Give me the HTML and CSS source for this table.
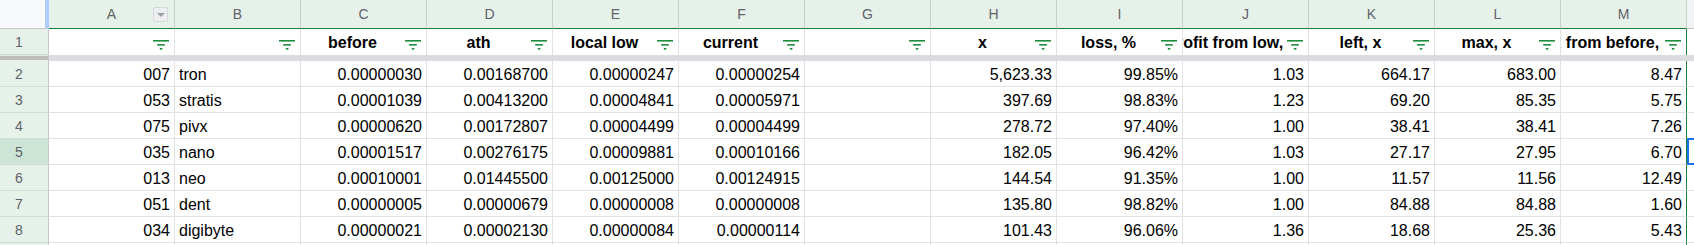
FILE: index.html
```html
<!DOCTYPE html>
<html>
<head>
<meta charset="utf-8">
<link rel="stylesheet" href="styles.css">
</head>
<body>
<div class="sheet">
  <div class="corner"></div>
  <div class="ch">A<span class="dd"></span></div>
  <div class="ch">B</div>
  <div class="ch">C</div>
  <div class="ch">D</div>
  <div class="ch">E</div>
  <div class="ch">F</div>
  <div class="ch">G</div>
  <div class="ch">H</div>
  <div class="ch">I</div>
  <div class="ch">J</div>
  <div class="ch">K</div>
  <div class="ch">L</div>
  <div class="ch">M</div>
  <div class="ch out"></div>

  <div class="rh">1</div>
  <div class="f"><span class="lbl"></span><span class="ico"><svg width="16" height="10" viewBox="0 0 16 10"><rect x="0" y="0" width="16" height="1.6"/><rect x="4.2" y="4" width="7.6" height="1.6"/><rect x="6.8" y="8" width="2.6" height="1.6"/></svg></span></div>
  <div class="f"><span class="lbl"></span><span class="ico"><svg width="16" height="10" viewBox="0 0 16 10"><rect x="0" y="0" width="16" height="1.6"/><rect x="4.2" y="4" width="7.6" height="1.6"/><rect x="6.8" y="8" width="2.6" height="1.6"/></svg></span></div>
  <div class="f"><span class="lbl"><span>before</span></span><span class="ico"><svg width="16" height="10" viewBox="0 0 16 10"><rect x="0" y="0" width="16" height="1.6"/><rect x="4.2" y="4" width="7.6" height="1.6"/><rect x="6.8" y="8" width="2.6" height="1.6"/></svg></span></div>
  <div class="f"><span class="lbl"><span>ath</span></span><span class="ico"><svg width="16" height="10" viewBox="0 0 16 10"><rect x="0" y="0" width="16" height="1.6"/><rect x="4.2" y="4" width="7.6" height="1.6"/><rect x="6.8" y="8" width="2.6" height="1.6"/></svg></span></div>
  <div class="f"><span class="lbl"><span>local low</span></span><span class="ico"><svg width="16" height="10" viewBox="0 0 16 10"><rect x="0" y="0" width="16" height="1.6"/><rect x="4.2" y="4" width="7.6" height="1.6"/><rect x="6.8" y="8" width="2.6" height="1.6"/></svg></span></div>
  <div class="f"><span class="lbl"><span>current</span></span><span class="ico"><svg width="16" height="10" viewBox="0 0 16 10"><rect x="0" y="0" width="16" height="1.6"/><rect x="4.2" y="4" width="7.6" height="1.6"/><rect x="6.8" y="8" width="2.6" height="1.6"/></svg></span></div>
  <div class="f"><span class="lbl"></span><span class="ico"><svg width="16" height="10" viewBox="0 0 16 10"><rect x="0" y="0" width="16" height="1.6"/><rect x="4.2" y="4" width="7.6" height="1.6"/><rect x="6.8" y="8" width="2.6" height="1.6"/></svg></span></div>
  <div class="f"><span class="lbl"><span>x</span></span><span class="ico"><svg width="16" height="10" viewBox="0 0 16 10"><rect x="0" y="0" width="16" height="1.6"/><rect x="4.2" y="4" width="7.6" height="1.6"/><rect x="6.8" y="8" width="2.6" height="1.6"/></svg></span></div>
  <div class="f"><span class="lbl"><span>loss, %</span></span><span class="ico"><svg width="16" height="10" viewBox="0 0 16 10"><rect x="0" y="0" width="16" height="1.6"/><rect x="4.2" y="4" width="7.6" height="1.6"/><rect x="6.8" y="8" width="2.6" height="1.6"/></svg></span></div>
  <div class="f"><span class="lbl"><span>profit from low, %</span></span><span class="ico"><svg width="16" height="10" viewBox="0 0 16 10"><rect x="0" y="0" width="16" height="1.6"/><rect x="4.2" y="4" width="7.6" height="1.6"/><rect x="6.8" y="8" width="2.6" height="1.6"/></svg></span></div>
  <div class="f"><span class="lbl"><span>left, x</span></span><span class="ico"><svg width="16" height="10" viewBox="0 0 16 10"><rect x="0" y="0" width="16" height="1.6"/><rect x="4.2" y="4" width="7.6" height="1.6"/><rect x="6.8" y="8" width="2.6" height="1.6"/></svg></span></div>
  <div class="f"><span class="lbl"><span>max, x</span></span><span class="ico"><svg width="16" height="10" viewBox="0 0 16 10"><rect x="0" y="0" width="16" height="1.6"/><rect x="4.2" y="4" width="7.6" height="1.6"/><rect x="6.8" y="8" width="2.6" height="1.6"/></svg></span></div>
  <div class="f last"><span class="lbl"><span>x from before, x</span></span><span class="ico"><svg width="16" height="10" viewBox="0 0 16 10"><rect x="0" y="0" width="16" height="1.6"/><rect x="4.2" y="4" width="7.6" height="1.6"/><rect x="6.8" y="8" width="2.6" height="1.6"/></svg></span></div>
  <div class="f out"></div>

  <div class="rbar"></div>
  <div class="bar"></div>

  <div class="rh">2</div>
  <div class="c num">007</div><div class="c">tron</div><div class="c num">0.00000030</div><div class="c num">0.00168700</div><div class="c num">0.00000247</div><div class="c num">0.00000254</div><div class="c"></div><div class="c num">5,623.33</div><div class="c num">99.85%</div><div class="c num">1.03</div><div class="c num">664.17</div><div class="c num">683.00</div><div class="c num last">8.47</div><div class="c"></div>

  <div class="rh">3</div>
  <div class="c num">053</div><div class="c">stratis</div><div class="c num">0.00001039</div><div class="c num">0.00413200</div><div class="c num">0.00004841</div><div class="c num">0.00005971</div><div class="c"></div><div class="c num">397.69</div><div class="c num">98.83%</div><div class="c num">1.23</div><div class="c num">69.20</div><div class="c num">85.35</div><div class="c num last">5.75</div><div class="c"></div>

  <div class="rh">4</div>
  <div class="c num">075</div><div class="c">pivx</div><div class="c num">0.00000620</div><div class="c num">0.00172807</div><div class="c num">0.00004499</div><div class="c num">0.00004499</div><div class="c"></div><div class="c num">278.72</div><div class="c num">97.40%</div><div class="c num">1.00</div><div class="c num">38.41</div><div class="c num">38.41</div><div class="c num last">7.26</div><div class="c"></div>

  <div class="rh sel">5</div>
  <div class="c num">035</div><div class="c">nano</div><div class="c num">0.00001517</div><div class="c num">0.00276175</div><div class="c num">0.00009881</div><div class="c num">0.00010166</div><div class="c"></div><div class="c num">182.05</div><div class="c num">96.42%</div><div class="c num">1.03</div><div class="c num">27.17</div><div class="c num">27.95</div><div class="c num last">6.70</div><div class="c active"></div>

  <div class="rh">6</div>
  <div class="c num">013</div><div class="c">neo</div><div class="c num">0.00010001</div><div class="c num">0.01445500</div><div class="c num">0.00125000</div><div class="c num">0.00124915</div><div class="c"></div><div class="c num">144.54</div><div class="c num">91.35%</div><div class="c num">1.00</div><div class="c num">11.57</div><div class="c num">11.56</div><div class="c num last">12.49</div><div class="c"></div>

  <div class="rh">7</div>
  <div class="c num">051</div><div class="c">dent</div><div class="c num">0.00000005</div><div class="c num">0.00000679</div><div class="c num">0.00000008</div><div class="c num">0.00000008</div><div class="c"></div><div class="c num">135.80</div><div class="c num">98.82%</div><div class="c num">1.00</div><div class="c num">84.88</div><div class="c num">84.88</div><div class="c num last">1.60</div><div class="c"></div>

  <div class="rh">8</div>
  <div class="c num">034</div><div class="c">digibyte</div><div class="c num">0.00000021</div><div class="c num">0.00002130</div><div class="c num">0.00000084</div><div class="c num">0.00000114</div><div class="c"></div><div class="c num">101.43</div><div class="c num">96.06%</div><div class="c num">1.36</div><div class="c num">18.68</div><div class="c num">25.36</div><div class="c num last">5.43</div><div class="c"></div>

  <div class="rh">9</div>
  <div class="c"></div><div class="c"></div><div class="c"></div><div class="c"></div><div class="c"></div><div class="c"></div><div class="c"></div><div class="c"></div><div class="c"></div><div class="c"></div><div class="c"></div><div class="c"></div><div class="c last"></div><div class="c"></div>
</div>
</body>
</html>
```

FILE: styles.css
```css
html, body {
  margin: 0;
  padding: 0;
  background: #ffffff;
  overflow: hidden;
}

.sheet {
  display: grid;
  grid-template-columns: 49px repeat(14, 126px);
  grid-template-rows: 29px 26px 6px repeat(9, 26px);
  font-family: "Liberation Sans", Arial, sans-serif;
  color: #000000;
}

.sheet > div {
  box-sizing: border-box;
  min-width: 0;
}

.corner {
  background: #f8f9fa;
  border-right: 4px solid #aecbfa;
  border-bottom: 1px solid #c4c7c5;
}

.ch {
  position: relative;
  display: flex;
  align-items: center;
  justify-content: center;
  background: #e6f1e9;
  border-right: 1px solid #c6d2c9;
  border-bottom: 1px solid #188038;
  font-size: 14px;
  color: #5f6368;
}

.ch.out {
  background: #f1f3f4;
  border-bottom-color: #c4c7c5;
}

.dd {
  position: absolute;
  right: 6px;
  top: 7px;
  width: 15px;
  height: 15px;
  box-sizing: border-box;
  background: #eceeef;
  border: 1px solid #d6d9dc;
  border-radius: 2px;
}

.dd::after {
  content: "";
  position: absolute;
  left: 3px;
  top: 5px;
  border-left: 4px solid transparent;
  border-right: 4px solid transparent;
  border-top: 4px solid #9aa0a6;
}

.rh {
  display: flex;
  align-items: center;
  justify-content: center;
  padding-right: 10px;
  background: #e6f1e9;
  border-right: 1px solid #c4c7c5;
  border-bottom: 1px solid #cfdcd3;
  font-size: 14px;
  color: #5f6368;
}

.rh.sel {
  background: #cde5d6;
}

.f {
  display: flex;
  align-items: stretch;
  padding: 0 0 0 3px;
  overflow: hidden;
  border-right: 1px solid #e2e2e2;
  font-size: 16px;
  font-weight: bold;
  white-space: nowrap;
}

.f.last {
  border-right-color: #188038;
}

.f.out {
  border-right: none;
}

.lbl {
  flex: 1;
  min-width: 0;
  display: flex;
  align-items: center;
  justify-content: center;
  padding-top: 2px;
  white-space: nowrap;
}

.ico {
  flex: none;
  display: flex;
  align-items: center;
  padding: 5px 5px 0 4px;
  background: #ffffff;
}

.ico svg {
  display: block;
  fill: #1e8e3e;
}

.rbar {
  background: #bdbdbd;
  border-top: 1px solid #dfe9e2;
  border-bottom: 1px solid #e6f1e9;
  border-right: 1px solid #c4c7c5;
}

.bar {
  grid-column: 2 / -1;
  background: #dadce0;
}

.c {
  border-right: 1px solid #e2e2e2;
  border-bottom: 1px solid #e2e2e2;
  font-size: 16px;
  line-height: 24px;
  padding: 2px 4px 0 4px;
  white-space: nowrap;
  overflow: hidden;
}

.c.num {
  text-align: right;
}

.c.last {
  border-right-color: #188038;
}

.c.active {
  position: relative;
  overflow: visible;
}

.c.active::after {
  content: "";
  position: absolute;
  left: 0;
  right: 0;
  top: -1px;
  bottom: -1px;
  border: 2px solid #1a73e8;
}
```
